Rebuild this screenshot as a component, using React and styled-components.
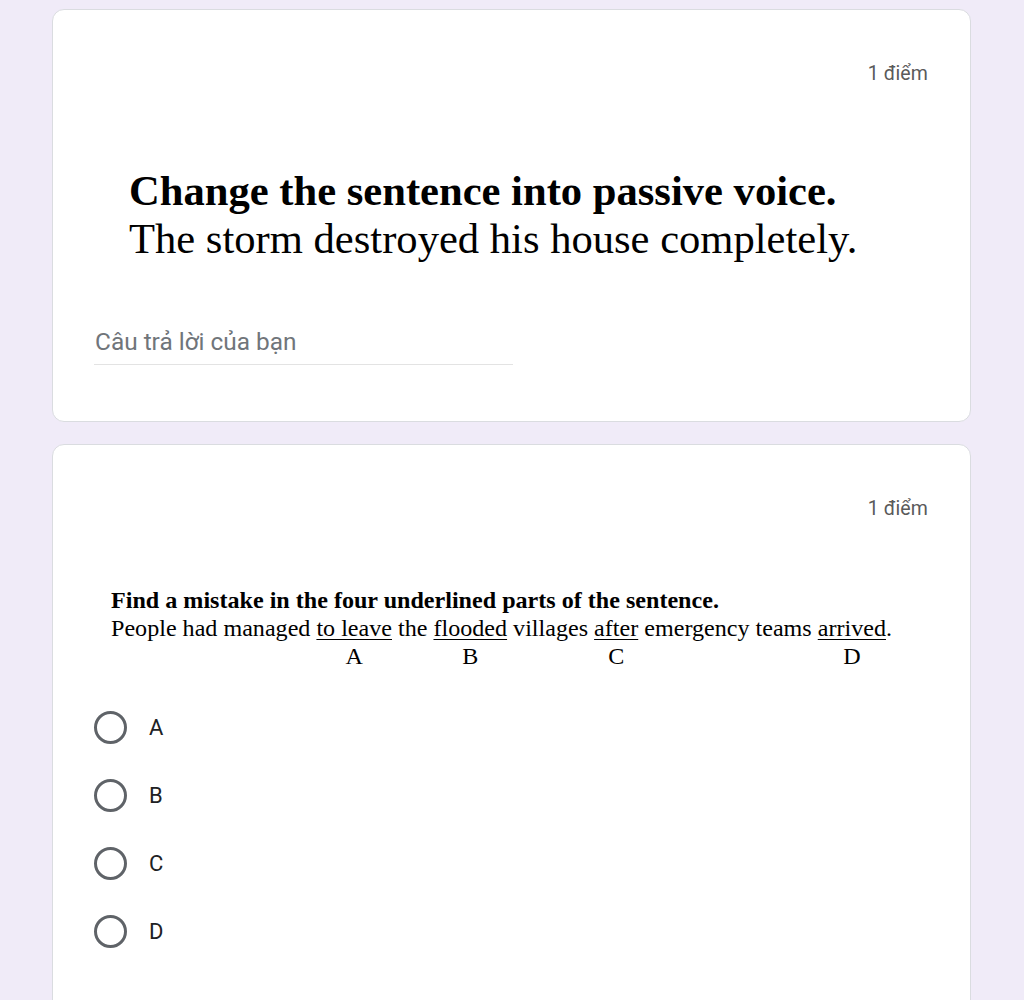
import React from 'react';
import styled, { createGlobalStyle } from 'styled-components';

const Global = createGlobalStyle`
  html, body { margin: 0; padding: 0; background: #f0ebf8; }
  body { font-family: Roboto, "Noto Sans", Arial, sans-serif; }
`;

const Page = styled.main`
  display: flex;
  flex-direction: column;
  gap: 22px;
  padding: 9px 53px 0 52px;
  height: 1000px;
  box-sizing: border-box;
  overflow: hidden;
`;

const Card = styled.section`
  background: #fff;
  border: 1px solid #dadce0;
  border-radius: 12px;
  padding: ${p => p.$pt}px 42px ${p => p.$pb || 0}px 42px;
  flex-shrink: 0;
`;

const Points = styled.div`
  text-align: right;
  font-size: 19.5px;
  line-height: 24px;
  color: #5a5a5a;
  letter-spacing: 0.1px;
`;

const SerifBlock = styled.div`
  font-family: "Liberation Serif", "Times New Roman", serif;
  color: #000;
  margin: ${p => p.$mt}px 0 0 ${p => p.$indent}px;
  font-size: ${p => p.$size}px;
  line-height: ${p => p.$lh}px;
`;

const Line = styled.div`
  font-weight: ${p => (p.$bold ? 700 : 400)};
  white-space: nowrap;
`;

const Answer = styled.div`
  margin-top: 64px;
  width: 418px;
  margin-left: -1px;
  padding-left: 1px;
  border-bottom: 1px solid #e3e3e3;
  font-size: 24.4px;
  line-height: 30px;
  padding-bottom: 7px;
  color: #70757a;
`;

const Marked = styled.span`
  display: inline-flex;
  flex-direction: column;
  align-items: center;
  vertical-align: top;
`;

const Word = styled.span`
  text-decoration: underline;
  text-decoration-thickness: 1px;
  text-underline-offset: 3px;
`;

const Options = styled.div`
  margin-top: 23px;
  display: flex;
  flex-direction: column;
`;

const Option = styled.label`
  display: flex;
  align-items: center;
  height: 68px;
  gap: 22px;
  margin-left: -1px;
  font-size: 22px;
  color: #202124;
`;

const Radio = styled.span`
  width: 33px;
  height: 33px;
  box-sizing: border-box;
  border: 3px solid #5f6368;
  border-radius: 50%;
  flex-shrink: 0;
`;

const M = ({ w, l }) => (
  <Marked>
    <Word>{w}</Word>
    <span>{l}</span>
  </Marked>
);

export default function App() {
  return (
    <>
      <Global />
      <Page>
        <Card $pt={52} $pb={56}>
          <Points>1 điểm</Points>
          <SerifBlock $mt={81} $indent={34} $size={42.6} $lh={48}>
            <Line $bold>Change the sentence into passive voice.</Line>
            <Line>The storm destroyed his house completely.</Line>
          </SerifBlock>
          <Answer>Câu trả lời của bạn</Answer>
        </Card>
        <Card $pt={52} $pb={60}>
          <Points>1 điểm</Points>
          <SerifBlock $mt={65} $indent={16} $size={24.1} $lh={28}>
            <Line $bold>Find a mistake in the four underlined parts of the sentence.</Line>
            <Line>
              People had managed <M w="to leave" l="A" /> the <M w="flooded" l="B" /> villages{' '}
              <M w="after" l="C" /> emergency teams <M w="arrived" l="D" />.
            </Line>
          </SerifBlock>
          <Options>
            {['A', 'B', 'C', 'D'].map(o => (
              <Option key={o}>
                <Radio />
                {o}
              </Option>
            ))}
          </Options>
        </Card>
      </Page>
    </>
  );
}
